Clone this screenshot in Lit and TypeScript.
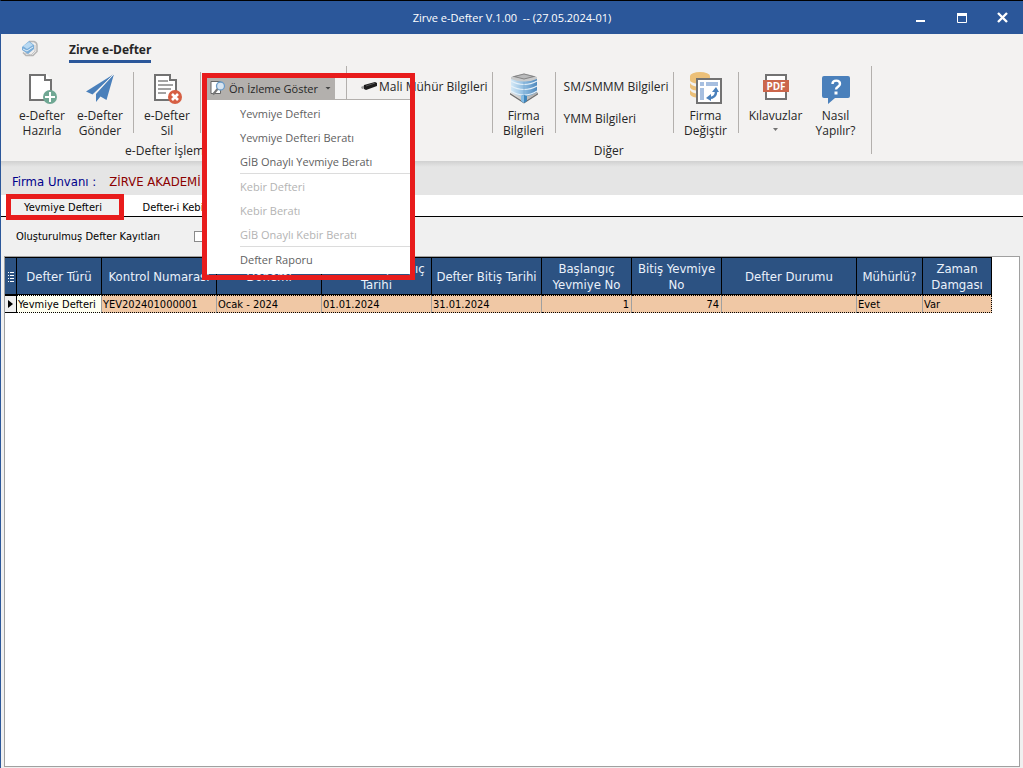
import { LitElement, html, css, svg, nothing, TemplateResult } from "lit";
import { customElement, property, state } from "lit/decorators.js";
import { classMap } from "lit/directives/class-map.js";

const icons: Record<string, TemplateResult> = {
  create: svg`
    <path d="M4 2h16l6 6v20H4z" fill="#fff"/>
    <path d="M4 3h15v5h6v20H4z" fill="#fff" stroke="#727272" stroke-width="2"/>
    <circle cx="24" cy="25" r="7" fill="#6fa793"/>
    <path d="M24 20v10M19 25h10" stroke="#fff" stroke-width="2"/>`,
  send: svg`
    <path d="M30 2L2 19.500l6.500 3z" fill="#4a80bb"/>
    <path d="M30 2L12 22v8l4.500-5.500 6 3.500z" fill="#4a80bb"/>
    <path d="M30 2L10 22.500" stroke="#f3f2f1" stroke-width="1"/>`,
  remove: svg`
    <path d="M4 3h15v5h6v20H4z" fill="#fff" stroke="#727272" stroke-width="2"/>
    <path d="M7 9h10M7 13h15M7 17h13M7 21h8" stroke="#a3a3a3" stroke-width="2"/>
    <circle cx="24" cy="25" r="7" fill="#d65f43"/>
    <path d="M21 22l6 6M27 22l-6 6" stroke="#fff" stroke-width="2.600"/>`,
  firm: svg`
    <defs>
      <linearGradient id="face" x1="0" x2="1"><stop offset="0" stop-color="#d4e9f7"/><stop offset=".5" stop-color="#8dbbe0"/><stop offset="1" stop-color="#4f89bd"/></linearGradient>
      <linearGradient id="base" x1="0" x2="1"><stop offset="0" stop-color="#e2e2e2"/><stop offset="1" stop-color="#a8a8a8"/></linearGradient>
    </defs>
    <path d="M2 21l4-3h20l4 3-14 9z" fill="url(#base)"/>
    <path d="M2 21v1.500l14 9 14-9V21l-14 9z" fill="#6d6d6d"/>
    <path d="M3 5v15q6 4 13 5 7-1 13-5V5z" fill="url(#face)"/>
    <path d="M3 9q6 3.500 13 3.500T29 9M3 14q6 3.500 13 3.500T29 14M3 19q6 4 13 4t13-4" fill="none" stroke="#e6f1f9" stroke-width="1.200"/>
    <path d="M16 8v17" stroke="#7ba9cf" stroke-width=".6"/>
    <path d="M3 5l13-3.500L29 5v2q-6 2.500-13 2.500T3 7z" fill="#c9cbcc"/>
    <path d="M4 4.500l12-3 12 3-12 3z" fill="#858585"/>
    <path d="M8 4.500l8-2 8 2-8 2z" fill="#b9babb"/>
    <path d="M13 24l3-1 3 1v5l-3 2-3-2z" fill="#3f86bd"/>
    <path d="M13 24l3-1v8l-3-2z" fill="#86bce3"/>`,
  change: svg`
    <path d="M0 4v4c0 5 20 5 20 0V4z" fill="#ecc078"/>
    <ellipse cx="10" cy="4" rx="10" ry="4" fill="#ecc078"/>
    <path d="M0 11c1 2 3 3 6 3.500v4C2 18 0 16.500 0 15zM0 18c1 2 3 3 6 3.500v4C2 25 0 23 0 22z" fill="#ecc078"/>
    <rect x="7" y="7" width="24" height="24" fill="#fff" stroke="#727272" stroke-width="2"/>
    <path d="M10 10h4v4h-4zM16 10h12v4H16zM10 16h4v12h-4z" fill="#a7bfe0"/>
    <path d="M19 26c5 0 7-3 7-6" fill="none" stroke="#4a80bb" stroke-width="2.500"/>
    <path d="M22 20l4-5 3 5zM21 22v7l-5-3z" fill="#4a80bb"/>`,
  help: svg`
    <path d="M4 4h24q2 0 2 2v18q0 2-2 2H15l-7 6v-6H4q-2 0-2-2V6q0-2 2-2z" fill="#4a80bb"/>
    <path d="M12.500 12c0-4.500 7.500-4.500 7.500 0 0 2.500-4 3-4 5.500" fill="none" stroke="#fff" stroke-width="2.400"/>
    <rect x="14.500" y="19.500" width="3" height="3" fill="#fff"/>`,
  pdf: svg`
    <rect x="6" y="3" width="20" height="24" fill="#fff" stroke="#727272" stroke-width="2"/>
    <rect x="3" y="8" width="26" height="12" fill="#cb664b"/>
    <text x="16" y="18" text-anchor="middle" font-size="10" font-weight="700" fill="#fff" font-family="Open Sans, sans-serif">PDF</text>`,
};

@customElement("ribbon-button")
class RibbonButton extends LitElement {
  @property() icon = "";
  @property() first = "";
  @property() second = "";
  @property({ type: Boolean }) drop = false;

  static styles = css`
    :host { display: block; }
    .big {
      display: flex; flex-direction: column; align-items: center;
      width: 100%; padding: 0; border: 0; background: none;
      font: 12px/15px "Open Sans", "Noto Sans", sans-serif; color: #262626;
      white-space: nowrap;
    }
    .glyph { display: block; margin-bottom: 4px; }
    .arrow { width: 5px; height: 3px; margin-top: 5px; background: #727272; clip-path: polygon(0 0, 100% 0, 50% 100%); }
  `;

  render() {
    return html`<button class="big" type="button">
      <svg class="glyph" width="32" height="32" viewBox="0 0 32 32" aria-hidden="true">${icons[this.icon]}</svg>
      <span>${this.first}</span>
      ${this.drop ? html`<span class="arrow"></span>` : html`<span>${this.second}</span>`}
    </button>`;
  }
}

interface MenuItem { label: string; disabled?: boolean; divided?: boolean }

const menu: MenuItem[] = [
  { label: "Yevmiye Defteri" },
  { label: "Yevmiye Defteri Beratı" },
  { label: "GİB Onaylı Yevmiye Beratı" },
  { label: "Kebir Defteri", disabled: true, divided: true },
  { label: "Kebir Beratı", disabled: true },
  { label: "GİB Onaylı Kebir Beratı", disabled: true },
  { label: "Defter Raporu", divided: true },
];

interface Column { title: string; width: number; value: string; numeric?: boolean }

const columns: Column[] = [
  { title: "Defter Türü", width: 85, value: "Yevmiye Defteri" },
  { title: "Kontrol Numarası", width: 115, value: "YEV202401000001" },
  { title: "Dönemi", width: 105, value: "Ocak - 2024" },
  { title: "Defter Başlangıç Tarihi", width: 110, value: "01.01.2024" },
  { title: "Defter Bitiş Tarihi", width: 110, value: "31.01.2024" },
  { title: "Başlangıç Yevmiye No", width: 90, value: "1", numeric: true },
  { title: "Bitiş Yevmiye No", width: 90, value: "74", numeric: true },
  { title: "Defter Durumu", width: 135, value: "" },
  { title: "Mühürlü?", width: 66, value: "Evet" },
  { title: "Zaman Damgası", width: 69, value: "Var" },
];

@customElement("app-root")
class AppRoot extends LitElement {
  @state() private tab = 0;

  static styles = css`
    :host {
      display: flex; flex-direction: column; box-sizing: border-box; min-height: 100vh;
      border-top: 1px solid #000; border-left: 1px solid #2b579a;
      background: #f0f0f0; color: #000;
      font: 11px/14px "DejaVu Sans Condensed", "Noto Sans", sans-serif;
    }
    * { box-sizing: border-box; }
    button { font: inherit; color: inherit; padding: 0; border: 0; background: none; }

    .title { display: grid; grid-template-columns: 1fr auto 1fr; align-items: center; height: 33px; background: #2b579a; color: #fff; font: 11px/16px "Open Sans", sans-serif; white-space: pre; }
    .caption { grid-column: 2; }
    .controls { display: flex; justify-content: flex-end; }
    .control { display: grid; place-items: center; width: 41px; height: 33px; color: #fff; }

    .ribbon { background: #f3f2f1; color: #262626; font: 12px/15px "Open Sans", "Noto Sans", sans-serif; }
    .tabs { display: flex; align-items: flex-start; gap: 31px; height: 32px; padding: 6px 20px 0; }
    .tab { height: 23px; border-bottom: 3px solid #2b579a; font-weight: 700; line-height: 20px; }
    .groups { display: flex; height: 95px; }
    .group { display: flex; flex-direction: column; align-items: center; height: 88px; border-right: 1px solid #b3b0ad; }
    .tools { display: flex; flex: none; align-items: flex-start; height: 77px; padding: 6px 8px 0 10px; }
    .group:first-child .tools { padding-left: 12px; }
    .divider { width: 1px; height: 61px; background: #b3b0ad; margin: 0 4px; }
    .group-name { flex: none; white-space: nowrap; }
    .b58 { width: 58px; }
    .b54 { width: 54px; }
    .b56 { width: 56px; }
    .b66 { width: 66px; }
    .stack { display: flex; flex-direction: column; align-items: flex-start; gap: 8px; padding: 2px 0 0 4px; }
    .small { display: flex; align-items: center; gap: 2px; height: 24px; white-space: nowrap; }
    .preview { position: relative; width: 133px; padding: 5px 0 0 2px; font-size: 11px; }
    .preview-button { display: flex; align-items: center; gap: 3px; width: 128px; height: 22px; padding: 0 4px 0 3px; background: #b3b0ad; white-space: nowrap; }
    .preview-button .arrow { margin-left: auto; }
    .arrow { width: 6px; height: 3px; background: #444; clip-path: polygon(0 0, 100% 0, 50% 100%); }
    .popup { position: absolute; z-index: 2; top: 27px; left: 2px; width: 205px; padding: 1px 2px 3px 33px; background: #fff; border-top: 1px solid #b3b0ad; }
    .frame { position: absolute; z-index: 3; border: 5px solid #e81c1c; pointer-events: none; }
    .menu-frame { top: 1px; left: -3px; width: 213px; height: 207px; }
    .item { display: block; width: 100%; height: 24px; text-align: left; color: #5f5f5f; }
    .item:disabled { color: #b3b3b3; }
    .rule { height: 0; margin: 0; border: 0; border-top: 1px solid #dcdcdc; }

    .firm { display: flex; gap: 13px; height: 34px; padding: 13px 11px 0; background: linear-gradient(#d0d0d0, #e5e5e5 6px); font-size: 13px; line-height: 16px; color: #00008b; }
    .firm-name { color: #8b0000; }
    .pages { position: relative; display: flex; height: 22px; padding-left: 6px; background: #fff; border-bottom: 1px solid #000; }
    .page { width: 112px; height: 21px; padding-top: 4px; }
    .page.active { height: 22px; background: #f0f0f0; }
    .page-frame { top: -1px; left: 5px; width: 118px; height: 26px; }
    .filter { display: flex; align-items: center; gap: 34px; height: 39px; padding-left: 15px; }
    .check { appearance: none; width: 11px; height: 11px; margin: 0; border: 1px solid #8a8a8a; background: #fff; }

    .grid { flex: 1; margin: 0 3px 1px; border: 1px solid #a0a0a0; background: #fff; overflow: hidden; }
    .table { border-collapse: separate; border-spacing: 0; table-layout: fixed; width: 987px; }
    .table th { height: 38px; padding: 2px 2px 0; border-right: 1px solid #000; border-bottom: 1px solid #000; border-top: 1px solid #000; background: #2c5282; color: #eaf1fb; font-weight: 400; font-size: 13px; line-height: 16px; }
    .table td { height: 18px; padding: 1px 1px 0; border-right: 1px solid #a0a0a0; border-bottom: 1px dotted #000; border-top: 1px dotted #000; background: #f0c8a5; white-space: nowrap; overflow: hidden; }
    .table td:last-child { border-right: 1px dotted #000; }
    .table td.current { background: #fffff0; }
    .table td.numeric { text-align: right; padding-right: 2px; }
    .table td.marker { padding: 0; border: 1px solid #000; border-left: 0; background: #f0f0f0; }
    .table svg { display: block; margin: auto; }
  `;

  render() {
    return html`
      <header class="title">
        <span class="caption">Zirve e-Defter V.1.00  -- (27.05.2024-01)</span>
        <div class="controls">
          <button class="control" aria-label="Simge durumuna küçült"><svg width="11" height="11"><path d="M1 9h9" stroke="#fff" stroke-width="2"/></svg></button>
          <button class="control" aria-label="Ekranı kapla"><svg width="10" height="10"><path d="M.5 1.500h9v8h-9z" fill="none" stroke="#fff"/><path d="M0 1.500h10" stroke="#fff" stroke-width="3"/></svg></button>
          <button class="control" aria-label="Kapat"><svg width="11" height="11"><path d="M1 1l9 9M10 1l-9 9" stroke="#fff" stroke-width="2.400"/></svg></button>
        </div>
      </header>
      <section class="ribbon">
        <div class="tabs">
          <svg width="17" height="17" viewBox="0 0 17 17" aria-hidden="true">
            <path d="M8 1.500h5q3 1 3 4v6l-4 4H5l-3-3" fill="#eee" stroke="#b5b5b5" stroke-width="1.500"/>
            <path d="M4 13l6 2 4-4V5" fill="none" stroke="#c5c5c5"/>
            <path d="M1 7l7-6 5 4v4l-6 5-6-4z" fill="#79add9"/>
            <path d="M2 6l6-4 4 3-6 4z" fill="#b8d9f2"/>
            <path d="M2 9l4 2 6-4" fill="none" stroke="#e3f0fa"/>
          </svg>
          <button class="tab">Zirve e-Defter</button>
        </div>
        <div class="groups">
          <div class="group">
            <div class="tools">
              <ribbon-button class="b58" icon="create" first="e-Defter" second="Hazırla"></ribbon-button>
              <ribbon-button class="b58" icon="send" first="e-Defter" second="Gönder"></ribbon-button>
              <span class="divider"></span>
              <ribbon-button class="b58" icon="remove" first="e-Defter" second="Sil"></ribbon-button>
              <span class="divider"></span>
              <div class="preview">
                <button class="preview-button" aria-haspopup="menu" aria-expanded="true">
                  <svg width="16" height="16" viewBox="0 0 16 16" aria-hidden="true">
                    <path d="M1 1.500h9.500v12H1z" fill="#fff" stroke="#666"/>
                    <circle cx="10.500" cy="6" r="4" fill="#d7e4f0" stroke="#6b9bc7" stroke-width="1.300"/>
                    <path d="M7.500 9L3 14.500" stroke="#777" stroke-width="2"/>
                  </svg>
                  <span>Ön İzleme Göster</span><span class="arrow"></span>
                </button>
                <div class="popup" role="menu">
                  ${menu.map((m) => html`${m.divided ? html`<hr class="rule">` : nothing}<button class="item" role="menuitem" ?disabled=${m.disabled}>${m.label}</button>`)}
                </div>
                <div class="frame menu-frame"></div>
              </div>
            </div>
            <span class="group-name">e-Defter İşlemleri</span>
          </div>
          <div class="group">
            <div class="tools">
              <div class="stack">
                <button class="small">
                  <svg width="16" height="16" viewBox="0 0 16 16" aria-hidden="true">
                    <path d="M0 9l4-2 1 3-4 1z" fill="#9c9c9c"/>
                    <path d="M3 7l11-3 2 1v3L5 12l-2-1z" fill="#1d1d1d"/>
                    <path d="M5 8l9-3" stroke="#555"/>
                  </svg>Mali Mühür Bilgileri
                </button>
              </div>
              <span class="divider"></span>
              <ribbon-button class="b54" icon="firm" first="Firma" second="Bilgileri"></ribbon-button>
              <span class="divider"></span>
              <div class="stack">
                <button class="small">SM/SMMM Bilgileri</button>
                <button class="small">YMM Bilgileri</button>
              </div>
              <span class="divider"></span>
              <ribbon-button class="b56" icon="change" first="Firma" second="Değiştir"></ribbon-button>
              <span class="divider"></span>
              <ribbon-button class="b66" icon="pdf" first="Kılavuzlar" drop></ribbon-button>
              <ribbon-button class="b54" icon="help" first="Nasıl" second="Yapılır?"></ribbon-button>
            </div>
            <span class="group-name">Diğer</span>
          </div>
        </div>
      </section>
      <div class="firm"><span>Firma Unvanı :</span><span class="firm-name">ZİRVE AKADEMİ</span></div>
      <nav class="pages">
        ${["Yevmiye Defteri", "Defter-i Kebir"].map((t, i) => html`<button class=${classMap({ page: true, active: this.tab === i })} @click=${() => (this.tab = i)}>${t}</button>`)}
        <div class="frame page-frame"></div>
      </nav>
      <div class="filter"><label for="records">Oluşturulmuş Defter Kayıtları</label><input class="check" id="records" type="checkbox"></div>
      <main class="grid">
        <table class="table">
          <colgroup><col style="width:12px">${columns.map((c) => html`<col style="width:${c.width}px">`)}</colgroup>
          <thead><tr>
            <th><svg width="6" height="10"><path d="M0 .5h1M2 .5h4M0 3.500h1M2 3.500h4M0 6.500h1M2 6.500h4M0 9.500h1M2 9.500h4" stroke="#fff"/></svg></th>
            ${columns.map((c) => html`<th scope="col">${c.title}</th>`)}
          </tr></thead>
          <tbody><tr>
            <td class="marker"><svg width="6" height="8"><path d="M0 0l5 4-5 4z"/></svg></td>
            ${columns.map((c, i) => html`<td class=${classMap({ numeric: !!c.numeric, current: i === 0 })}>${c.value}</td>`)}
          </tr></tbody>
        </table>
      </main>
    `;
  }
}
